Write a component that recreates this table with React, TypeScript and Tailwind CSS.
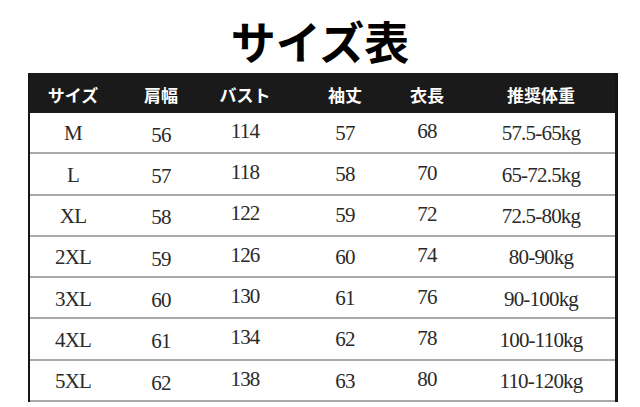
import React from "react";

const headers = ["サイズ", "肩幅", "バスト", "袖丈", "衣長", "推奨体重"];

const rows = [
  ["M", "56", "114", "57", "68", "57.5-65kg"],
  ["L", "57", "118", "58", "70", "65-72.5kg"],
  ["XL", "58", "122", "59", "72", "72.5-80kg"],
  ["2XL", "59", "126", "60", "74", "80-90kg"],
  ["3XL", "60", "130", "61", "76", "90-100kg"],
  ["4XL", "61", "134", "62", "78", "100-110kg"],
  ["5XL", "62", "138", "63", "80", "110-120kg"],
];

// the source image has slightly uneven baselines per column
const cellPad = ["pt-[3px]", "pt-[6px]", "pb-[2px]", "pt-[2px]", "pb-[1px]", "pt-[3px]"];
const grid = "grid grid-cols-[86px_90px_78px_122px_42px_186px]";

const App = () => {
  return (
    <div className="w-[640px] h-[407px] bg-white overflow-hidden">
      <div className="h-[73px] flex items-center justify-center pt-[7px]">
        <h1
          className="text-[45px] leading-none font-bold text-black"
          style={{ fontFamily: '"Noto Sans CJK JP", "Noto Sans", sans-serif' }}
        >
          サイズ表
        </h1>
      </div>
      <div className="ml-[28px] w-[590px] border-l-2 border-r-[3px] border-[#151515]">
        <div
          className={`${grid} h-[40px] bg-[#1a1a1a] text-white text-[17px] font-bold`}
          style={{ fontFamily: '"Noto Sans CJK JP", "Noto Sans", sans-serif' }}
        >
          {headers.map(h => (
            <div key={h} className="flex items-center justify-center pt-[4px] whitespace-nowrap">{h}</div>
          ))}
        </div>
        {rows.map(r => (
          <div
            key={r[0]}
            className={`${grid} h-[41.3px] border-b-2 border-[#a9a9a9] text-[21px] text-[#2a2a2a] tracking-[-0.8px]`}
            style={{ fontFamily: '"Liberation Serif", "DejaVu Serif", serif' }}
          >
            {r.map((c, i) => (
              <div key={i} className={`flex items-center justify-center whitespace-nowrap ${cellPad[i]}`}>{c}</div>
            ))}
          </div>
        ))}
      </div>
    </div>
  );
};

export default App;
